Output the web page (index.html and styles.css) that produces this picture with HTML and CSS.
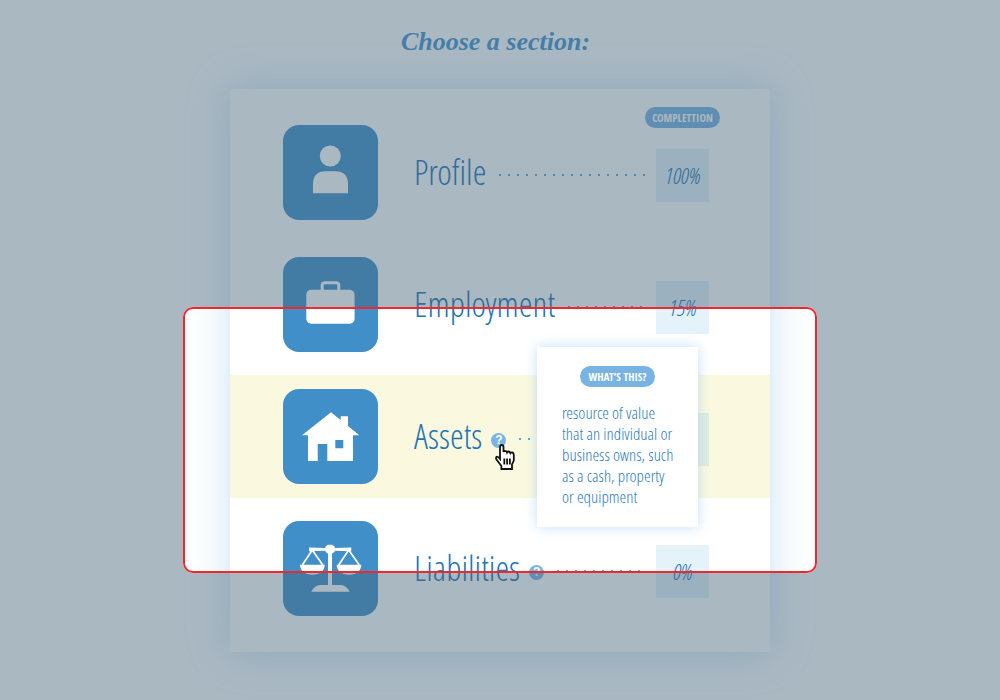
FILE: index.html
```html
<!DOCTYPE html>
<html lang="en">
<head>
<meta charset="utf-8">
<title>Choose a section</title>
<link rel="stylesheet" href="styles.css">
</head>
<body>
<main class="page">
  <h1 class="title">Choose a section:</h1>
  <div class="stage">
    <section class="card">
      <span class="pill completion">COMPLETTION</span>
      <ul class="rows">
        <li class="row">
          <a class="section" href="#profile">
            <svg class="tile" viewBox="0 0 95 95" aria-hidden="true">
              <circle cx="47.3" cy="31" r="10.5"/>
              <path d="M30 68.3V59q0-12.7 13-12.7h9Q65 46.3 65 59v9.3z"/>
            </svg>
            <span class="name">Profile</span>
          </a>
          <span class="dots"></span>
          <span class="percent">100%</span>
        </li>
        <li class="row">
          <a class="section" href="#employment">
            <svg class="tile" viewBox="0 0 95 95" aria-hidden="true">
              <rect x="23.3" y="32.7" width="48.3" height="34" rx="5"/>
              <path class="line" d="M39.200 34v-5.500q0-2.800 2.800-2.800h11q2.800 0 2.800 2.800v5.500"/>
            </svg>
            <span class="name">Employment</span>
          </a>
          <span class="dots"></span>
          <span class="percent">15%</span>
        </li>
        <li class="row active">
          <a class="section" href="#assets">
            <svg class="tile" viewBox="0 0 95 95" aria-hidden="true">
              <path fill-rule="evenodd" d="M48 23.3 57.7 31v-3.7H65V37l11.300 9.300H70V72H44.300V55h-9.600v17H25V46.300h-6zM52.300 51v8.300h8V51z"/>
            </svg>
            <span class="name">Assets</span>
          </a>
          <span class="hint">
            <button class="help" type="button" aria-label="What are assets?" aria-describedby="tip">?</button>
            <svg class="cursor" viewBox="0 0 20 26" aria-hidden="true">
              <path d="M5 3q0-2 1.700-2T8.500 3v5q.5-1.200 1.700-1.200T12 8.500q.5-1 1.600-1t1.700 1.600q.4-.7 1.600-.7 1.700.2 1.900 2.600v5.500l-1.800 4V25H6.400v-3L1.500 15.500q-1-2 .2-2.700 1.200-.5 3.300 2.200z"/>
              <path d="M9.300 14.500v6M12.100 14.500v6M14.900 14.500v6"/>
            </svg>
          </span>
          <span class="dots"></span>
          <span class="percent"></span>
          <div class="tooltip" id="tip" role="tooltip">
            <span class="pill">WHAT’S THIS?</span>
            <p class="tip-text">resource of value<br>that an individual or<br>business owns, such<br>as a cash, property<br>or equipment</p>
          </div>
        </li>
        <li class="row">
          <a class="section" href="#liabilities">
            <svg class="tile" viewBox="0 0 95 95" aria-hidden="true">
              <path d="M26 26.500 42.500 27v-1.500l2.500-1.700h4l2.700 1.700V27l16.600-.5v3.700l-16.600-.5v1l-2.700 2V64h9q5 0 8.700 6.700H28.300Q32 64 37 64h8V32.700l-2.500-2v-1L26 30.200z"/>
              <path d="M17 43.700h24.700c0 6-5 10-12.300 10S17 49.700 17 43.700zM53.700 43.700h24.600c0 6-5 10-12.300 10s-12.300-4-12.300-10z"/>
              <path class="thin" d="m19.300 44 10-15 10.400 15M55.700 44l10-15 10.600 15"/>
            </svg>
            <span class="name">Liabilities</span>
          </a>
          <span class="hint">
            <button class="help" type="button" aria-label="What are liabilities?">?</button>
          </span>
          <span class="dots"></span>
          <span class="percent">0%</span>
        </li>
      </ul>
    </section>
    <div class="spotlight"></div>
  </div>
</main>
</body>
</html>
```
FILE: styles.css
```css
* { box-sizing: border-box; }
body {
  margin: 0;
  background: #fff;
  color: #2674b4;
  font-family: "Open Sans Condensed Light", "Open Sans Condensed", "Liberation Sans Narrow", sans-serif;
  font-weight: 300;
}
.page { min-height: 100vh; padding: 24px 20px 48px; overflow: hidden; }
.title {
  margin: 0 0 29px;
  padding-right: 9px;
  font: italic bold 26px/36px "Liberation Serif", serif;
  text-align: center;
  color: #4696d0;
}
.stage { position: relative; max-width: 634px; margin: 0 auto; padding: 0 47px; }
.card {
  position: relative;
  padding: 22px 0;
  background: #fff;
  box-shadow: 0 0 38px rgba(120, 185, 230, .4);
}
.rows { display: grid; gap: 9px; margin: 0; padding: 0; list-style: none; }
.row {
  position: relative;
  display: flex;
  align-items: center;
  padding: 14px 61px 14px 53px;
}
.active { background: #faf9df; }
.section {
  display: flex;
  align-items: center;
  gap: 36px;
  color: inherit;
  text-decoration: none;
}
.tile { width: 95px; height: 95px; border-radius: 16px; background: #418fc8; fill: #fff; }
.line { fill: none; stroke: #fff; stroke-width: 3; }
.thin { fill: none; stroke: #fff; stroke-width: 1.7; }
.name { padding-bottom: 2px; font-size: 35px; line-height: 40px; }
.hint { position: relative; display: flex; margin: 7px 0 0 9px; }
.help {
  width: 15px;
  height: 15px;
  padding: 0;
  border: 0;
  border-radius: 50%;
  background: #7ab5e4;
  color: #fff;
  font: bold 12px/15px "Liberation Sans", sans-serif;
}
.cursor {
  position: absolute;
  z-index: 1;
  top: 11px;
  left: 4px;
  width: 20px;
  height: 26px;
  fill: #fff;
  stroke: #111;
  stroke-width: 1.8;
}
.dots {
  flex: 1;
  height: 3px;
  margin: 5px 11px 0 13px;
  background: radial-gradient(circle at 1px 1px, #66a5d3 1px, transparent 1px) 0 0 / 9px 3px repeat-x;
}
.percent {
  width: 53px;
  height: 53px;
  margin-top: 5px;
  background: rgba(120, 190, 230, .2);
  font-size: 22px;
  line-height: 52px;
  font-style: italic;
  text-align: center;
}
.pill {
  display: block;
  width: 75px;
  border-radius: 11px;
  background: #78b3e2;
  color: #fff;
  font-family: "Open Sans Condensed", "Liberation Sans Narrow", sans-serif;
  font-size: 11px;
  line-height: 21px;
  font-weight: bold;
  text-align: center;
  white-space: nowrap;
}
.completion { position: absolute; z-index: 1; top: 18px; right: 50px; }
.tooltip {
  position: absolute;
  z-index: 2;
  top: -28px;
  right: 72px;
  width: 161px;
  padding: 19px 0 20px 25px;
  background: #fff;
  box-shadow: 0 0 12px rgba(110, 175, 235, .4);
  color: #2f7cbc;
}
.tooltip .pill { margin-left: 18px; }
.tip-text { margin: 15px 0 0; font-size: 17px; line-height: 21px; white-space: nowrap; }
.spotlight {
  position: absolute;
  z-index: 3;
  top: 218px;
  left: 0;
  right: 0;
  height: 266px;
  border: 2px solid #f0282d;
  border-radius: 10px;
  box-shadow: 0 0 0 200vmax rgba(69, 98, 120, .453);
  pointer-events: none;
}
```
